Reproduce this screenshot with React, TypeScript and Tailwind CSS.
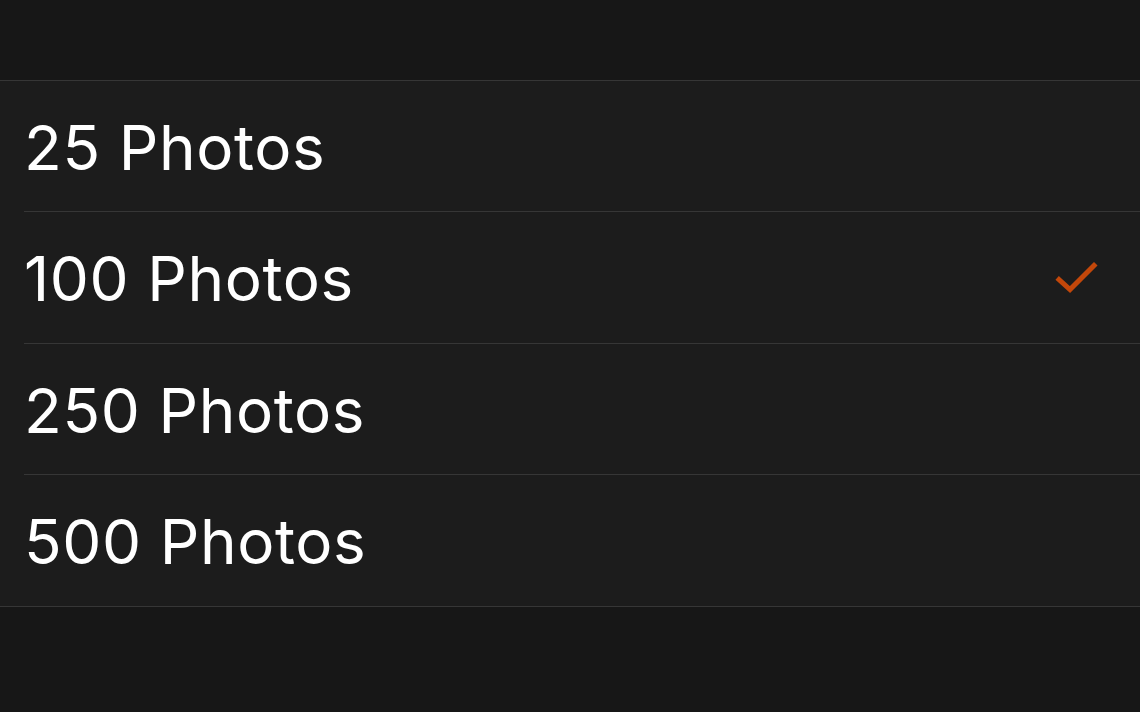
import React from "react";

const items = [
  { label: "25 Photos", checked: false, h: "h-[131px]" },
  { label: "100 Photos", checked: true, h: "h-[132px]" },
  { label: "250 Photos", checked: false, h: "h-[131px]" },
  { label: "500 Photos", checked: false, h: "h-[131px]" },
];

export default function App() {
  return (
    <div className="w-[1140px] h-[712px] bg-[#171717] flex flex-col" style={{ fontFamily: "Inter, 'Liberation Sans', sans-serif" }}>
      <div className="h-[80px] shrink-0" />
      <div className="bg-[#1c1c1c] border-t border-b border-[#363636] flex flex-col">
        {items.map((it, i) => (
          <div key={it.label} className="pl-[24px]">
            <div
              className={
                it.h +
                " flex items-center justify-between pr-[41px] pt-[3px] " +
                (i < items.length - 1 ? "border-b border-[#363636]" : "")
              }
            >
              <span className="text-white text-[62px] leading-none tracking-[0.6px]">{it.label}</span>
              {it.checked && (
                <svg width="44" height="34" viewBox="0 0 44 34" className="-mt-[3px]">
                  <path d="M4 18.5 L15 28.5 L39 4.5" fill="none" stroke="#c2470a" strokeWidth="5" strokeLinecap="square" />
                </svg>
              )}
            </div>
          </div>
        ))}
      </div>
    </div>
  );
}
